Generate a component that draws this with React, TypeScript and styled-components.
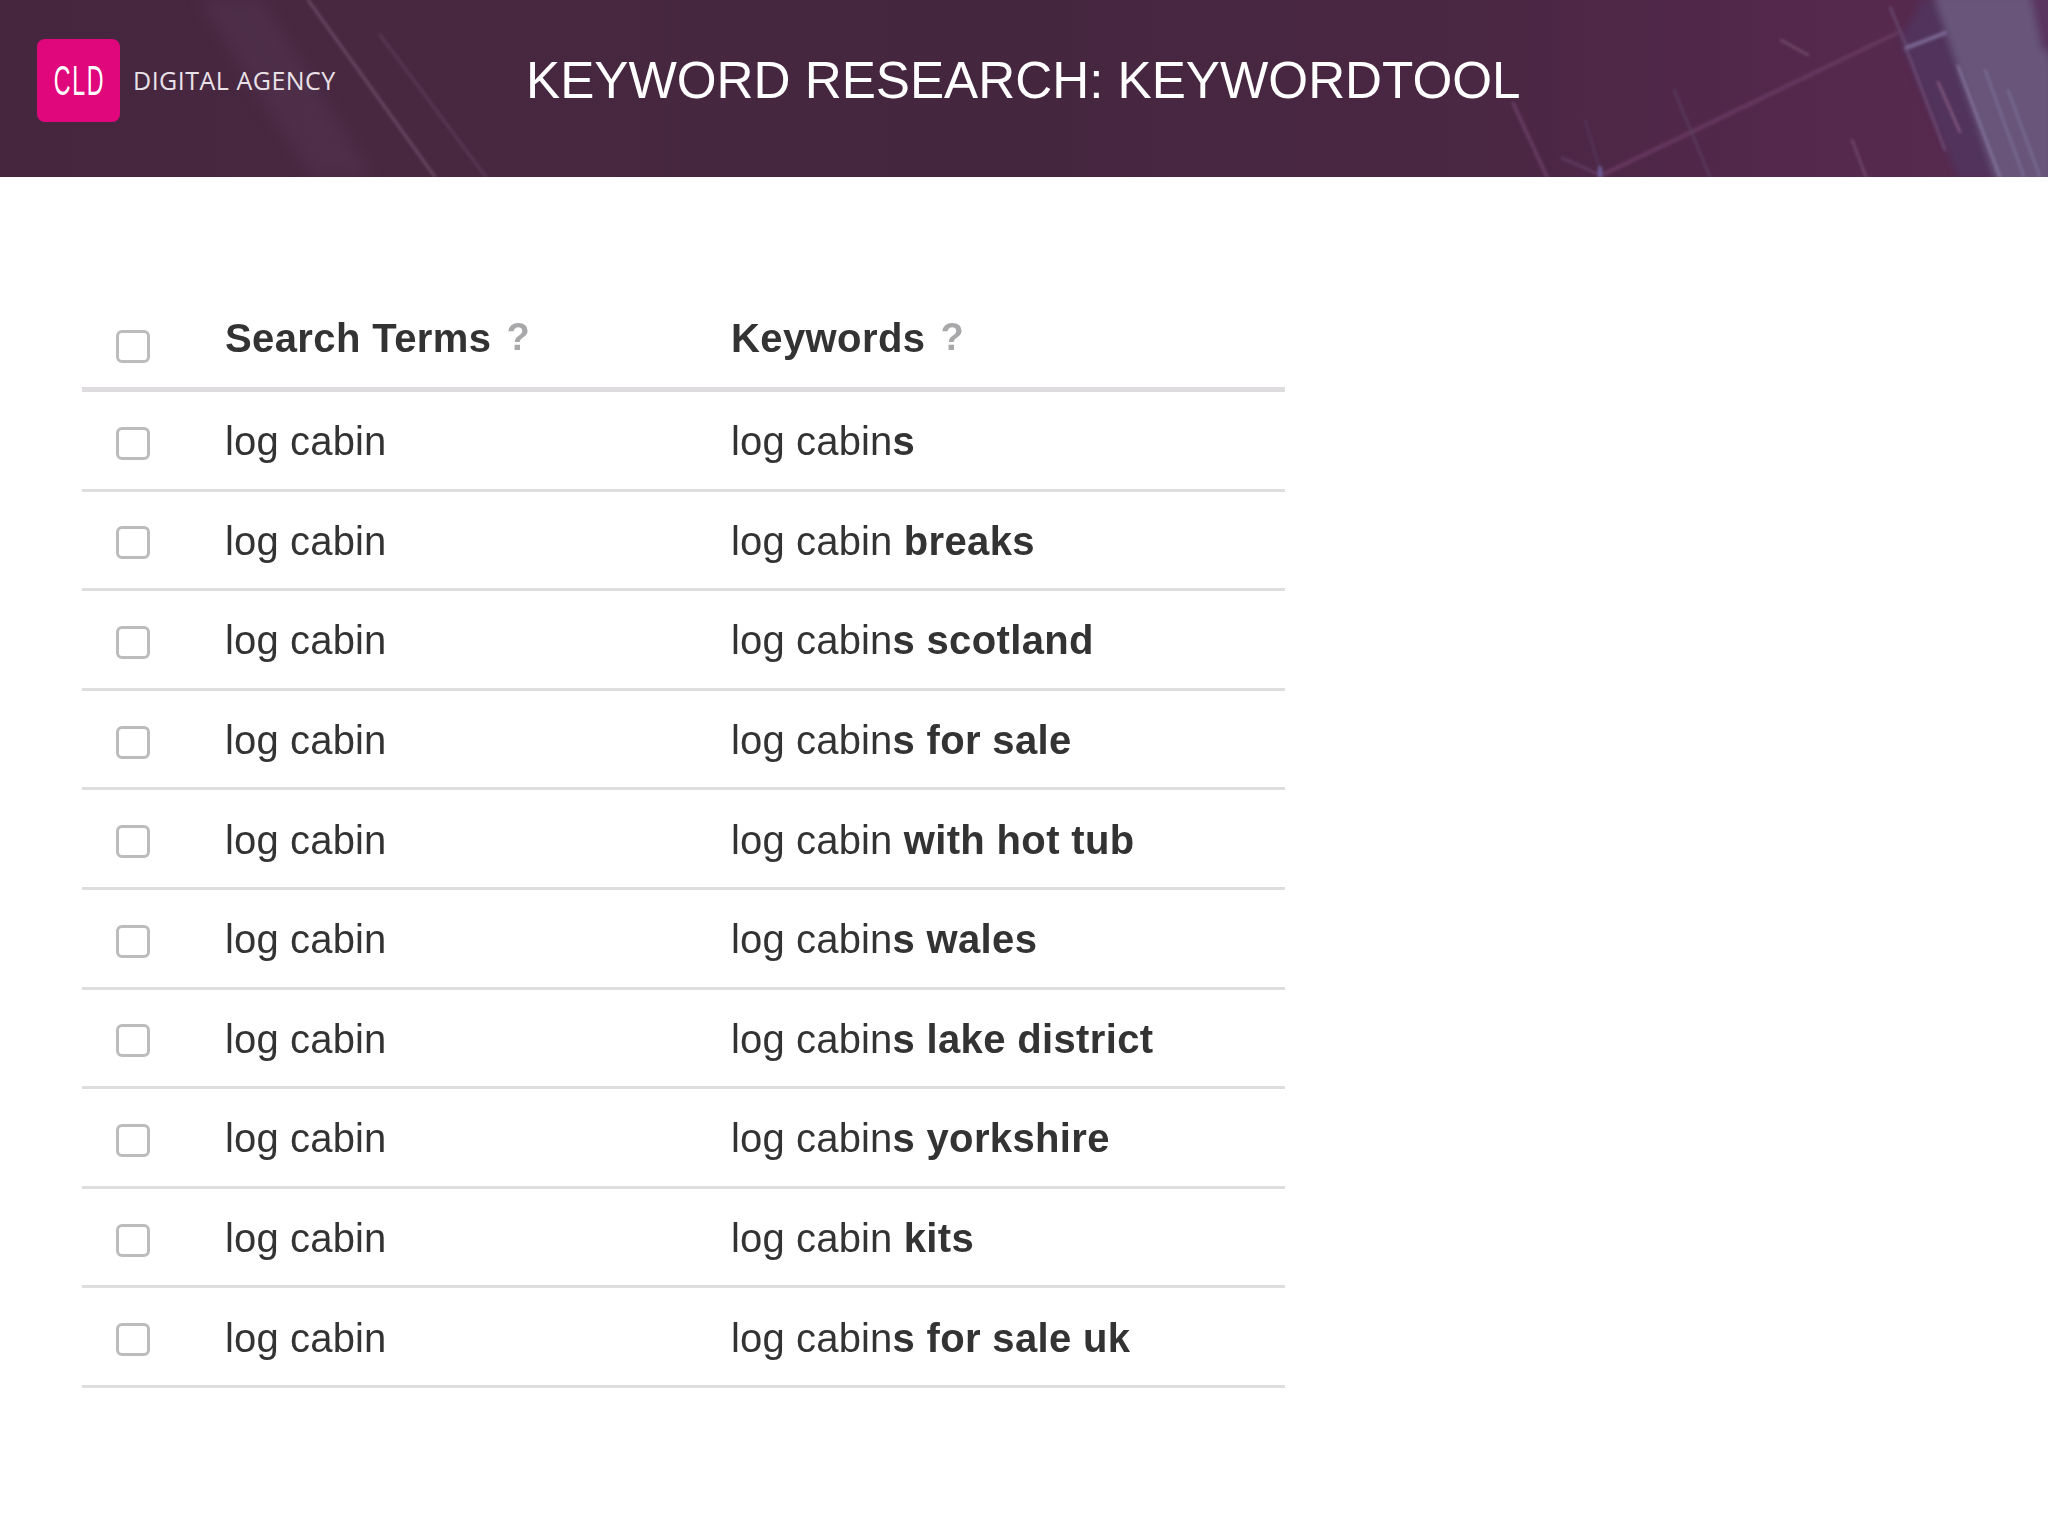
import React from "react";
import styled, { createGlobalStyle } from "styled-components";

const Global = createGlobalStyle`
  html, body { margin: 0; padding: 0; background: #fff; }
  body { font-family: "Liberation Sans", Arial, sans-serif; width: 2048px; height: 1536px; overflow: hidden; }
`;

const Page = styled.div`
  width: 2048px;
  height: 1536px;
  background: #fff;
`;

const Header = styled.header`
  position: relative;
  height: 177px;
  overflow: hidden;
  display: flex;
  align-items: center;
  padding: 0 0 16px 37px;
  box-sizing: border-box;
  background: linear-gradient(90deg, #46263f 0%, #482841 18%, #45263f 50%, #4a2743 72%, #55284d 90%, #582a51 100%);
`;

const Backdrop = styled.svg`
  position: absolute;
  inset: 0;
  width: 100%;
  height: 100%;
`;

const LogoMark = styled.div`
  position: relative;
  width: 83px;
  height: 83px;
  margin-top: -1px;
  border-radius: 8px;
  background: #e0067b;
  display: flex;
  align-items: center;
  justify-content: center;
  flex: none;
`;

const LogoLetters = styled.span`
  display: inline-block;
  color: #fff;
  font-size: 43px;
  line-height: 1;
  letter-spacing: 3px;
  transform: translateX(1px) scaleX(0.54);
  white-space: nowrap;
`;

const LogoName = styled.span`
  position: relative;
  margin-left: 13px;
  width: 203px;
  flex: none;
  color: #e9e2e8;
  font-family: "Open Sans", sans-serif;
  font-weight: 400;
  font-size: 25px;
  letter-spacing: 0.5px;
  line-height: 1;
  white-space: nowrap;
  margin-top: -1px;
`;

const Title = styled.h1`
  position: relative;
  margin: 0 0 0 190px;
  color: #fff;
  font-family: "Liberation Sans", Arial, sans-serif;
  font-weight: 400;
  font-size: 51.2px;
  line-height: 1;
  white-space: nowrap;
`;

const Table = styled.section`
  width: 1203px;
  margin: 114px 0 0 82px;
  color: #333;
  font-family: "Liberation Sans", Arial, sans-serif;
  font-size: 40px;
  letter-spacing: 0.15px;
  filter: blur(0.45px);
`;

const HeadRow = styled.div`
  display: grid;
  grid-template-columns: 143px 506px 1fr;
  height: 101px;
  box-sizing: border-box;
  align-items: center;
  border-bottom: 5px solid #dedcdf;
  font-weight: 700;
  letter-spacing: 0.4px;
`;

const Row = styled.div`
  display: grid;
  grid-template-columns: 143px 506px 1fr;
  height: 99.6px;
  box-sizing: border-box;
  align-items: center;
  border-bottom: 3px solid #dfdddf;
`;

const Box = styled.input.attrs({ type: "checkbox" })<{ $head?: boolean }>`
  appearance: none;
  box-sizing: border-box;
  width: 34px;
  height: 33px;
  margin: ${(p) => (p.$head ? "15px" : "6px")} 0 0 34px;
  border: 3px solid #bcbcbe;
  border-radius: 6px;
  background: #fff;
`;

const Help = styled.span`
  color: #a8a8aa;
  margin-left: 15px;
  font-size: 38px;
  position: relative;
  top: -2px;
`;

const HeadCell = styled.div`
  white-space: nowrap;
  line-height: 46px;
  margin-top: -2px;
`;

const Cell = styled.div`
  white-space: nowrap;
  line-height: 46px;
  margin-top: 2px;
`;

const Strong = styled.b`
  font-weight: 700;
  letter-spacing: 0.35px;
`;

const rows: [string, string][] = [
  ["log cabin", "s"],
  ["log cabin ", "breaks"],
  ["log cabin", "s scotland"],
  ["log cabin", "s for sale"],
  ["log cabin ", "with hot tub"],
  ["log cabin", "s wales"],
  ["log cabin", "s lake district"],
  ["log cabin", "s yorkshire"],
  ["log cabin ", "kits"],
  ["log cabin", "s for sale uk"],
];

function HeaderArt() {
  return (
    <Backdrop viewBox="0 0 2048 177" preserveAspectRatio="none" aria-hidden="true">
      <defs>
        <filter id="soft" x="-20%" y="-20%" width="140%" height="140%">
          <feGaussianBlur stdDeviation="1.6" />
        </filter>
        <filter id="mid" x="-30%" y="-30%" width="160%" height="160%">
          <feGaussianBlur stdDeviation="3.5" />
        </filter>
        <filter id="wide" x="-30%" y="-30%" width="160%" height="160%">
          <feGaussianBlur stdDeviation="8" />
        </filter>
      </defs>
      <polygon points="200,0 262,0 372,177 312,177" fill="#5a3a58" opacity="0.35" filter="url(#wide)" />
      <g filter="url(#mid)">
        <polygon points="1900,40 1922,0 1945,0 2002,177 1958,177" fill="#50355f" opacity="0.75" />
        <polygon points="1933,-6 2034,-6 2054,70 2054,184 1997,184 1960,75" fill="#675479" />
        <polygon points="2030,-6 2056,-6 2056,50 2042,50" fill="#5a3560" />
      </g>
      <g filter="url(#soft)" fill="none" strokeLinecap="round">
        <line x1="308" y1="0" x2="435" y2="177" stroke="#775572" strokeWidth="2" />
        <line x1="380" y1="35" x2="486" y2="177" stroke="#5e3f5c" strokeWidth="2" />
        <line x1="1513" y1="103" x2="1547" y2="177" stroke="#6f436a" strokeWidth="2.5" />
        <line x1="1897" y1="33" x2="1602" y2="175" stroke="#663760" strokeWidth="4" />
        <line x1="1781" y1="40" x2="1808" y2="55" stroke="#7f5672" strokeWidth="2" />
        <line x1="1674" y1="90" x2="1710" y2="177" stroke="#5a3c60" strokeWidth="2" />
        <line x1="1562" y1="158" x2="1600" y2="175" stroke="#64406a" strokeWidth="2" />
        <line x1="1585" y1="120" x2="1602" y2="177" stroke="#563860" strokeWidth="1.5" />
        <line x1="1852" y1="140" x2="1866" y2="177" stroke="#75506f" strokeWidth="2" />
        <line x1="1890" y1="7" x2="1906" y2="45" stroke="#6a4e74" strokeWidth="2" />
        <line x1="1906" y1="48" x2="1945" y2="33" stroke="#7b6a96" strokeWidth="4" />
        <line x1="1906" y1="48" x2="1945" y2="150" stroke="#71527a" strokeWidth="2" />
        <line x1="1938" y1="82" x2="1960" y2="132" stroke="#8d5f86" strokeWidth="2" />
        <line x1="1958" y1="66" x2="2000" y2="177" stroke="#84749c" strokeWidth="2.5" />
        <line x1="1985" y1="70" x2="2024" y2="177" stroke="#7d7098" strokeWidth="2" />
        <line x1="2008" y1="90" x2="2040" y2="177" stroke="#7d7098" strokeWidth="2" />
        <line x1="1600" y1="168" x2="1600" y2="177" stroke="#6d5c98" strokeWidth="4" />
      </g>
    </Backdrop>
  );
}

export default function App() {
  return (
    <Page>
      <Global />
      <Header>
        <HeaderArt />
        <LogoMark>
          <LogoLetters>CLD</LogoLetters>
        </LogoMark>
        <LogoName>DIGITAL AGENCY</LogoName>
        <Title>KEYWORD RESEARCH: KEYWORDTOOL</Title>
      </Header>
      <Table>
        <HeadRow>
          <Box $head aria-label="Select all" />
          <HeadCell>
            Search Terms<Help>?</Help>
          </HeadCell>
          <HeadCell>
            Keywords<Help>?</Help>
          </HeadCell>
        </HeadRow>
        {rows.map(([plain, bold], i) => (
          <Row key={i}>
            <Box aria-label={`Select row ${i + 1}`} />
            <Cell>log cabin</Cell>
            <Cell>
              {plain}
              <Strong>{bold}</Strong>
            </Cell>
          </Row>
        ))}
      </Table>
    </Page>
  );
}
